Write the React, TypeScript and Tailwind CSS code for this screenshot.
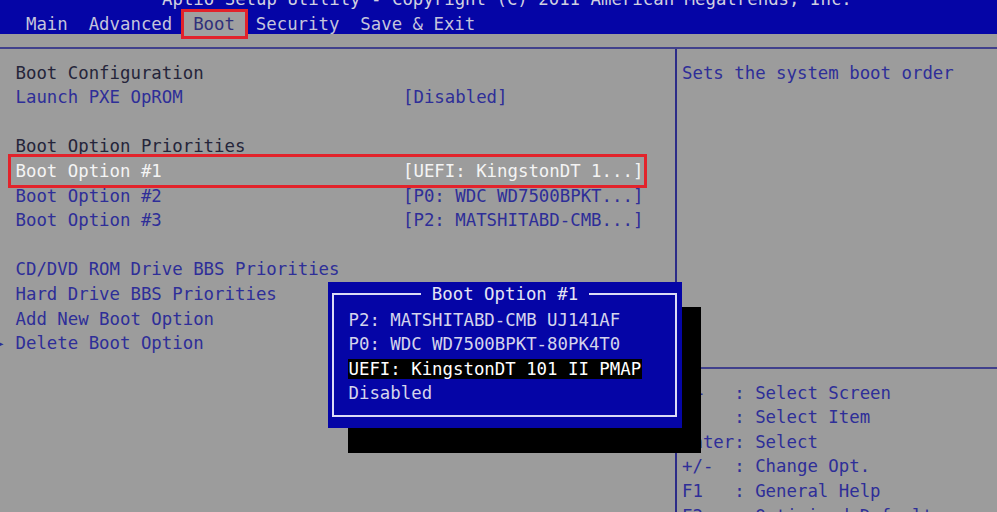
const rows: { label: string; value?: string; tone: "dark" | "blue" | "white" | "blank"; boxed?: boolean; cursor?: boolean }[] = [
  { label: "Boot Configuration", tone: "dark" },
  { label: "Launch PXE OpROM", value: "[Disabled]", tone: "blue" },
  { label: "", tone: "blank" },
  { label: "Boot Option Priorities", tone: "dark" },
  { label: "Boot Option #1", value: "[UEFI: KingstonDT 1...]", tone: "white", boxed: true },
  { label: "Boot Option #2", value: "[P0: WDC WD7500BPKT...]", tone: "blue" },
  { label: "Boot Option #3", value: "[P2: MATSHITABD-CMB...]", tone: "blue" },
  { label: "", tone: "blank" },
  { label: "CD/DVD ROM Drive BBS Priorities", tone: "blue" },
  { label: "Hard Drive BBS Priorities", tone: "blue" },
  { label: "Add New Boot Option", tone: "blue" },
  { label: "Delete Boot Option", tone: "blue", cursor: true },
];

const keys = [
  "\u2192\u2190   : Select Screen",
  "\u2191\u2193   : Select Item",
  "Enter: Select",
  "+/-  : Change Opt.",
  "F1   : General Help",
  "F2   : Optimized Defaults",
];

const choices = [
  "P2: MATSHITABD-CMB UJ141AF",
  "P0: WDC WD7500BPKT-80PK4T0",
  "UEFI: KingstonDT 101 II PMAP",
  "Disabled",
];

const toneClass = {
  dark: "text-[#25253a]",
  blue: "text-[#2e2e98]",
  white: "text-[#f4f4f4]",
  blank: "",
};

const App = () => {
  return (
    <div
      className="relative w-[997px] h-[512px] overflow-hidden bg-[#9c9c9c] text-[17.36px] whitespace-pre"
      style={{ fontFamily: '"DejaVu Sans Mono", "Liberation Mono", monospace' }}
    >
      <header className="flow-root h-[34px] bg-[#0505a6]">
        <div className="mt-[-13px] h-[24.6px] leading-[24.6px] pl-[162px] text-[#d0d0e0]">
          Aptio Setup Utility - Copyright (C) 2011 American Megatrends, Inc.
        </div>
        <nav className="flex pl-[15.5px] h-[24px] leading-[24px] text-[#c4c4dc]">
          <span className="px-[10.45px]">Main</span>
          <span className="px-[10.45px]">Advanced</span>
          <span className="relative px-[10.45px] bg-[#a0a0a0] text-[#30307a]">
            Boot
            <span className="absolute -left-[2px] -right-[3px] -top-[3px] -bottom-[3px] border-[3px] border-[#e2232b]" />
          </span>
          <span className="px-[10.45px]">Security</span>
          <span className="px-[10.45px]">Save &amp; Exit</span>
        </nav>
      </header>

      <div className="mt-[13px] flex h-[470px] border-t-2 border-[#40408c]">
        <section className="w-[675px] pl-[15.5px] pt-[11.7px]">
          {rows.map((r, i) => (
            <div key={i} className={`relative flex h-[24.6px] leading-[24.6px] ${toneClass[r.tone]}`}>
              {r.cursor && (
                <span className="absolute left-[-19px] text-[14px] text-[#2e2e98]">{"\u25B8"}</span>
              )}
              <span className="w-[387.5px]">{r.label}</span>
              {r.value && <span>{r.value}</span>}
              {r.boxed && (
                <span className="absolute left-[-7.5px] top-[-5.5px] w-[639px] h-[34px] border-[3px] border-[#e2232b]" />
              )}
            </div>
          ))}
        </section>

        <aside className="flex flex-1 flex-col border-l-2 border-[#2c2c88]">
          <div className="h-[318px] shrink-0 pl-[5px] pt-[11.7px] leading-[24.6px] text-[#2e2e98]">
            Sets the system boot order
          </div>
          <div className="shrink-0 border-t-2 border-[#40408c] pl-[5px] pt-[11.7px] text-[#2e2e98]">
            {keys.map((k) => (
              <div key={k} className="h-[24.6px] leading-[24.6px]">
                {k}
              </div>
            ))}
          </div>
        </aside>
      </div>

      <div className="absolute left-[348px] top-[307px] w-[353px] h-[146px] bg-black" />
      <div className="absolute left-[328px] top-[282px] w-[354px] h-[146px] bg-[#0505a6] pt-[25.7px] pl-[20px] text-[#d4d4ec]">
        <span className="absolute left-[4px] right-[5px] top-[11px] bottom-[11px] border-2 border-[#dcdcf6]" />
        <div className="absolute left-0 right-0 top-0 h-[24.6px] leading-[24.6px] text-center">
          <span className="bg-[#0505a6] px-[10.45px] text-[#e4e4f4]">Boot Option #1</span>
        </div>
        {choices.map((c, i) => (
          <div key={c} className="relative h-[24.6px] leading-[24.6px]">
            <span className={i === 2 ? "bg-black text-white px-[0.5px]" : "pl-[0.5px]"}>{c}</span>
          </div>
        ))}
      </div>
    </div>
  );
};

export default App;
